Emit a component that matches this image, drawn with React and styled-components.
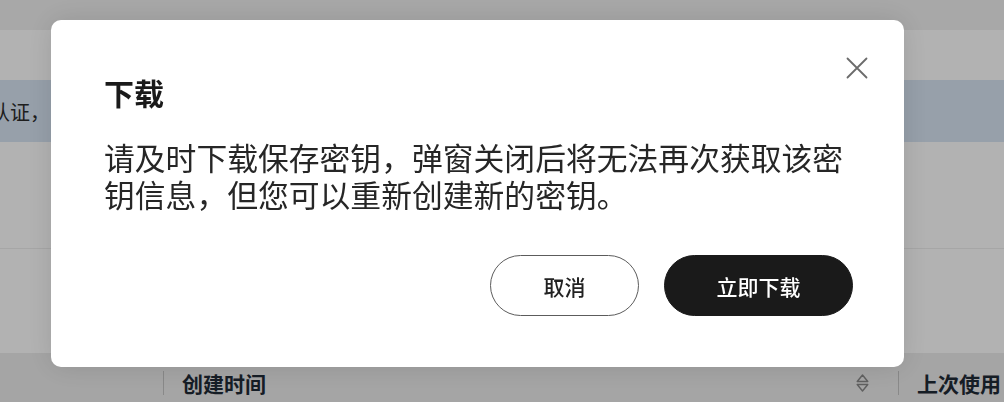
import React from 'react';
import styled, { createGlobalStyle } from 'styled-components';

//////////////////////////////////////////////////

const GlobalStyle = createGlobalStyle`
  html, body {
    margin: 0;
    padding: 0;
    width: 1004px;
    height: 402px;
    overflow: hidden;
    background: #ffffff;
    font-family: "Noto Sans CJK SC", "Noto Sans", sans-serif;
  }
`;

//////////////////////////////////////////////////

const CloseIcon = () => (
  <svg width="22" height="22" viewBox="0 0 22 22" fill="none">
    <path d="M1.5 1.5L20.5 20.5M20.5 1.5L1.5 20.5" stroke="#6b6b6b" strokeWidth="1.8" strokeLinecap="round" />
  </svg>
);

const SortIcon = () => (
  <svg width="13" height="20" viewBox="0 0 13 20" fill="none">
    <path d="M1.2 8.5L6.5 2L11.8 8.5Z" stroke="#8a8a8a" strokeWidth="1.4" strokeLinejoin="round" />
    <path d="M1.2 11.5L6.5 18L11.8 11.5Z" stroke="#8a8a8a" strokeWidth="1.4" strokeLinejoin="round" />
  </svg>
);

const App = () => {
  return (
    <>
      <GlobalStyle />
      <Page>
        <TopBar />
        <Blank $height={50} />
        <NoticeBand>
          <NoticeText>认证，</NoticeText>
        </NoticeBand>
        <Blank $height={106} $line />
        <Blank $height={104} />
        <TableHeader>
          <HeaderCell $width={163} />
          <HeaderCell $grow>
            创建时间
            <SortSlot>
              <SortIcon />
            </SortSlot>
          </HeaderCell>
          <HeaderCell $width={106}>上次使用</HeaderCell>
        </TableHeader>
      </Page>

      <Overlay>
        <Modal>
          <CloseButton aria-label="关闭">
            <CloseIcon />
          </CloseButton>
          <Title>下载</Title>
          <Body>请及时下载保存密钥，弹窗关闭后将无法再次获取该密钥信息，但您可以重新创建新的密钥。</Body>
          <Footer>
            <ActionButton $width={149}>取消</ActionButton>
            <ActionButton $width={189} $primary>立即下载</ActionButton>
          </Footer>
        </Modal>
      </Overlay>
    </>
  );
};

//////////////////////////////////////////////////

const Page = styled.div`
  display: flex;
  flex-direction: column;
  width: 1004px;
  height: 402px;
  overflow: hidden;
`;

const TopBar = styled.div`
  height: 30px;
  flex-shrink: 0;
  background: #f1f1f1;
`;

const Blank = styled.div`
  height: ${p => p.$height}px;
  flex-shrink: 0;
  background: #ffffff;
  border-bottom: ${p => (p.$line ? '1px solid #eeeeee' : 'none')};
`;

const NoticeBand = styled.div`
  height: 62px;
  flex-shrink: 0;
  display: flex;
  align-items: center;
  background: #d8e5f4;
`;

const NoticeText = styled.span`
  margin-left: -10px;
  font-size: 20px;
  color: #2b2b2b;
  white-space: nowrap;
`;

const TableHeader = styled.div`
  height: 60px;
  flex-shrink: 0;
  display: flex;
  align-items: center;
  background: #ececec;
`;

const HeaderCell = styled.div`
  display: flex;
  align-items: center;
  flex: ${p => (p.$grow ? '1' : `0 0 ${p.$width}px`)};
  height: 24px;
  padding-left: 18px;
  font-size: 21px;
  font-weight: 700;
  color: #1f2a36;
  white-space: nowrap;
  box-sizing: border-box;
  & + & {
    border-left: 1px solid #c4c4c4;
  }
`;

const SortSlot = styled.span`
  display: flex;
  margin-left: auto;
  margin-right: 29px;
`;

const Overlay = styled.div`
  position: fixed;
  inset: 0;
  display: flex;
  align-items: flex-start;
  padding: 20px 0 0 51px;
  background: rgba(0, 0, 0, 0.3);
`;

const Modal = styled.div`
  position: relative;
  box-sizing: border-box;
  width: 853px;
  height: 347px;
  padding: 54px 51px 51px 53px;
  display: flex;
  flex-direction: column;
  background: #ffffff;
  border-radius: 10px;
  box-shadow: 0 0 28px rgba(0, 0, 0, 0.12);
`;

const CloseButton = styled.button`
  position: absolute;
  top: 37px;
  right: 36px;
  display: flex;
  padding: 0;
  border: none;
  background: none;
  cursor: pointer;
`;

const Title = styled.div`
  font-size: 30px;
  line-height: 36px;
  font-weight: 700;
  color: #1a1a1a;
`;

const Body = styled.p`
  margin: 28px 0 0;
  font-size: 30.8px;
  line-height: 37px;
  color: #262626;
`;

const Footer = styled.div`
  display: flex;
  justify-content: flex-end;
  gap: 25px;
  margin-top: auto;
`;

const ActionButton = styled.button`
  width: ${p => p.$width}px;
  height: 61px;
  box-sizing: border-box;
  border-radius: 31px;
  border: 1px solid ${p => (p.$primary ? '#1a1a1a' : '#5c5c5c')};
  background: ${p => (p.$primary ? '#1a1a1a' : '#ffffff')};
  color: ${p => (p.$primary ? '#ffffff' : '#222222')};
  font-family: "Noto Sans CJK SC", "Noto Sans", sans-serif;
  font-size: 21px;
  font-weight: 500;
  cursor: pointer;
`;

//////////////////////////////////////////////////

export default App;
